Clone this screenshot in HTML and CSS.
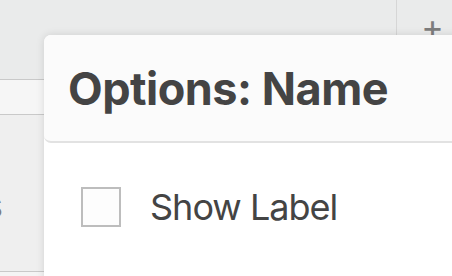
FILE: index.html
```html
<!DOCTYPE html>
<html lang="en">
<head>
    <title>Options: Name</title>
    <meta charset="UTF-8">
    <meta name="viewport" content="width=device-width, initial-scale=1.0">
    <link rel="stylesheet" href="styles.css">
</head>
<body>
    <div class="toolbar">
        <div class="tab-fill"></div>
        <div class="tab-add">+</div>
    </div>

    <div class="sidebar">
        <div class="row row-light"></div>
        <div class="row row-tall"><span class="row-name">Columns</span></div>
        <div class="row"></div>
    </div>

    <div class="popover" role="dialog" aria-labelledby="popover-title">
        <div class="popover-header">
            <h3 id="popover-title">Options: Name</h3>
        </div>
        <div class="popover-body">
            <label class="check">
                <input type="checkbox" id="showLabel">
                <span class="box"></span>
                <span>Show Label</span>
            </label>
        </div>
    </div>
</body>
</html>
```

FILE: styles.css
```css
body {
    margin: 0;
    padding: 0;
    width: 452px;
    height: 276px;
    overflow: hidden;
    background-color: #eaebeb;
    font-family: Inter, "Helvetica Neue", Arial, sans-serif;
    color: #444;
}

.toolbar {
    height: 79px;
    display: flex;
}

.tab-fill {
    width: 396px;
    border-right: 1px solid #d6d6d6;
}

.tab-add {
    flex: 1;
    text-align: center;
    font-size: 34px;
    line-height: 1;
    padding: 10px 0 0 16px;
    color: #7d7d7d;
    font-weight: 400;
}

.sidebar {
    border-top: 1px solid #c9c9c9;
}

.row {
    height: 34px;
    border-bottom: 1px solid #c9c9c9;
    background-color: #f4f4f4;
}

.row-light {
    background-color: #f6f6f6;
}

.row-tall {
    height: 132px;
    padding-top: 24px;
    background-color: #efefef;
    display: flex;
    justify-content: flex-end;
    align-items: center;
    overflow: hidden;
    width: 44px;
}

.row-name {
    font-size: 36px;
    color: #7d7d7d;
    white-space: nowrap;
    margin-right: 41px;
}

.popover {
    position: absolute;
    left: 44px;
    top: 35px;
    width: 440px;
    height: 300px;
    background-color: #fff;
    border-radius: 7px 0 0 0;
    box-shadow: 0 0 8px rgba(0, 0, 0, 0.12);
}

.popover-header {
    height: 106px;
    background-color: #fbfbfb;
    border-bottom: 2px solid #e2e2e2;
    border-radius: 7px 0 0 7px;
    display: flex;
    align-items: center;
    padding-left: 24px;
}

h3 {
    margin: 0;
    font-size: 45px;
    font-weight: 700;
    letter-spacing: -0.5px;
    color: #444;
}

.popover-body {
    padding: 42px 0 0 37px;
}

.check {
    display: flex;
    align-items: center;
    font-size: 36px;
    letter-spacing: -1px;
}

.check input {
    display: none;
}

.box {
    width: 36px;
    height: 36px;
    border: 2px solid #bdbdbd;
    background-color: #fdfdfd;
    margin-right: 29px;
}
```
